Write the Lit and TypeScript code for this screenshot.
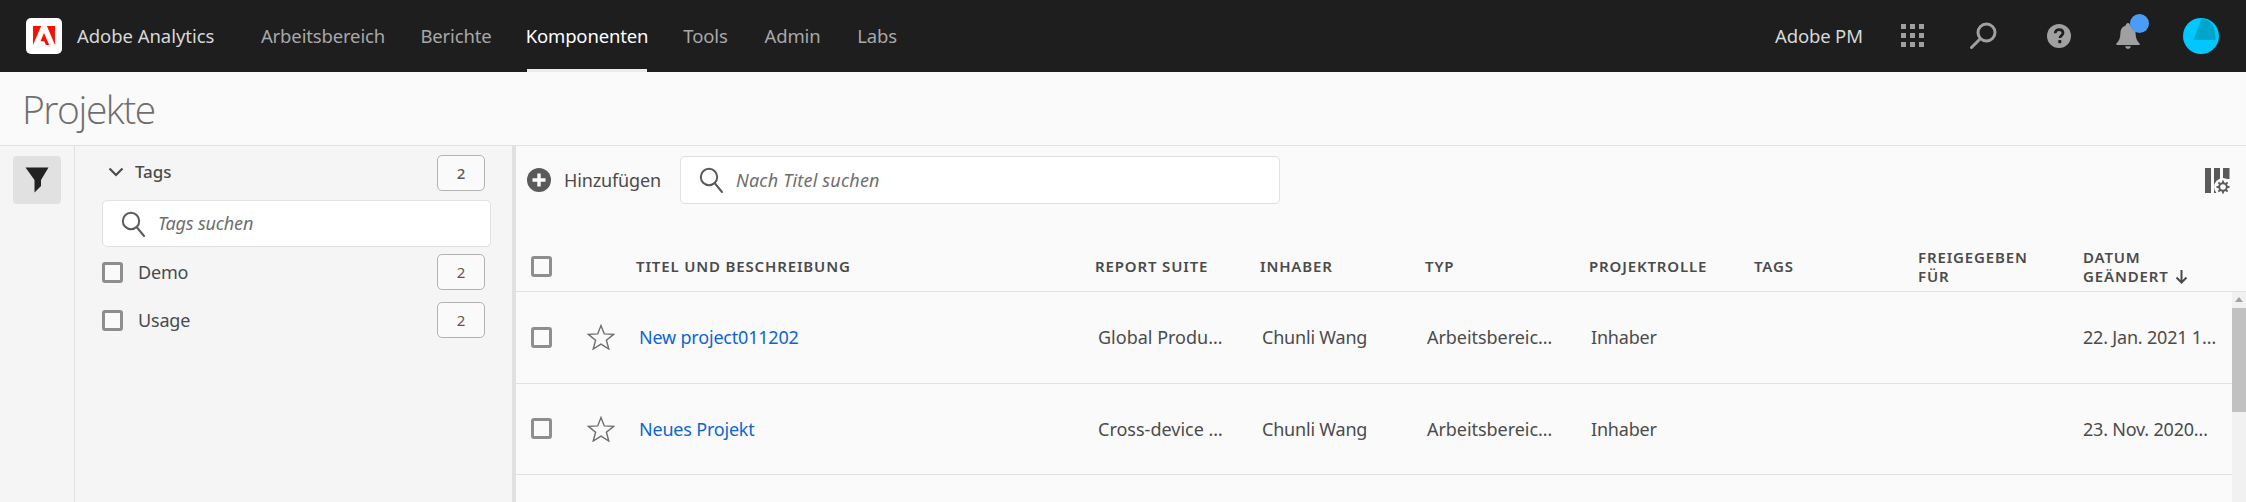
import { LitElement, html, css, svg } from "lit";
import { customElement } from "lit/decorators.js";

const searchIcon = (cls: string) => html`<svg class=${cls} viewBox="0 0 24 26" fill="none" stroke="currentColor" stroke-width="2"><circle cx="10" cy="10" r="8.2"/><path d="M16 16.5 L23 25" stroke-linecap="round"/></svg>`;
const star = html`<svg class="star" viewBox="0 0 28 26" fill="none" stroke="#6e6e6e" stroke-width="1.4"><path d="M14 1.5 L17.3 9.9 L26.6 10.4 L19.4 16.2 L21.8 25 L14 20.1 L6.2 25 L8.6 16.2 L1.4 10.4 L10.7 9.9 Z"/></svg>`;

const columns = ["Titel und Beschreibung", "Report Suite", "Inhaber", "Typ", "Projektrolle", "Tags", "Freigegeben für"];
const rows = [
  { title: "New project011202", suite: "Global Produ…", owner: "Chunli Wang", type: "Arbeitsbereic…", role: "Inhaber", date: "22. Jan. 2021 1…" },
  { title: "Neues Projekt", suite: "Cross-device …", owner: "Chunli Wang", type: "Arbeitsbereic…", role: "Inhaber", date: "23. Nov. 2020…" },
];

@customElement("app-root")
export class AppRoot extends LitElement {
  static styles = css`
    :host { display: block; height: 100vh; overflow: hidden; background: #fafafa; color: #4b4b4b;
      font-family: "Noto Sans", "Open Sans", sans-serif; font-size: 17px; }
    * { box-sizing: border-box; }
    header { height: 72px; background: #1e1e1e; display: flex; align-items: stretch; color: #a8a8a8; }
    .brand { width: 261px; padding-left: 26px; display: flex; align-items: center; gap: 15px; color: #d8d8d8; font-size: 18.5px; letter-spacing: -0.05px; white-space: nowrap; padding-bottom: 1px; }
    .logo { width: 36px; height: 36px; background: #fff; border-radius: 5px; display: flex; align-items: center; justify-content: center; }
    .logo svg { width: 22px; height: 19px; display: block; }
    nav { display: grid; grid-template-columns: 124px 70px 120px 45px 57px 40px; column-gap: 36px; }
    nav a { display: flex; align-items: center; justify-content: center; white-space: nowrap; font-size: 18.5px; letter-spacing: -0.15px; padding-bottom: 2px; }
    nav a.on { color: #fff; box-shadow: inset 0 -3px 0 #ececec; }
    .tools { margin-left: auto; display: flex; align-items: center; color: #a0a0a0; }
    .user { color: #d8d8d8; font-size: 18.5px; letter-spacing: -0.15px; width: 126px; white-space: nowrap; padding-bottom: 1px; }
    .tools svg { display: block; }
    .grid9 { width: 23px; height: 23px; margin-right: 45px; margin-top: -2px; }
    .hsearch { width: 28px; height: 28px; margin-right: 50px; margin-top: -1px; }
    .help { width: 24px; height: 24px; margin-right: 45px; margin-top: -1px; }
    .bell { position: relative; width: 24px; height: 26px; margin-right: 43px; }
    .dot { position: absolute; left: 14px; top: -9px; width: 19px; height: 19px; border-radius: 50%; background: #4b9cf5; }
    .avatar { width: 36px; height: 36px; margin-right: 27px; }
    .title { height: 74px; border-bottom: 1px solid #e1e1e1; padding-left: 22px; font-size: 39px; font-weight: 300; color: #6e6e6e; display: flex; align-items: center; letter-spacing: -1.45px; font-family: "Open Sans", sans-serif; }
    main { display: flex; height: 356px; overflow: hidden; }
    .rail { width: 75px; flex: none; background: #f5f5f5; border-right: 1px solid #e1e1e1; padding: 10px 0 0 13px; }
    .rail button { width: 48px; height: 48px; background: #e1e1e1; border: 0; border-radius: 4px; padding: 0; display: flex; align-items: center; justify-content: center; }
    .rail svg { width: 24px; height: 26px; }
    .panel { width: 437px; flex: none; background: #f5f5f5; padding: 9px 21px 0 27px; }
    .splitter { width: 4px; flex: none; background: #e1e1e1; }
    .thead { height: 36px; display: flex; align-items: center; padding-left: 6px; font-weight: 500; font-size: 17px; letter-spacing: -0.1px; }
    .thead .lbl { margin-top: -3px; }
    .thead svg { width: 16px; height: 10px; margin-right: 11px; margin-top: -2px; }
    .badge { margin-left: auto; margin-right: 6px; width: 48px; height: 36px; border: 1px solid #b3b3b3; border-radius: 5px; display: flex; align-items: center; justify-content: center; font-size: 15px; color: #5a5a5a; background: #fafafa; }
    .tsearch { height: 47px; margin-top: 9px; background: #fff; border: 1px solid #e1e1e1; border-radius: 5px; display: flex; align-items: center; padding-left: 18px; gap: 13px; color: #6e6e6e; font-style: italic; font-size: 18px; letter-spacing: -0.15px; line-height: 24px; }
    .tsearch .ph { margin-top: -2px; }
    .ic { width: 24px; height: 26px; flex: none; color: #5a5a5a; }
    .tag { height: 36px; margin-top: 12px; display: flex; align-items: center; font-size: 18px; letter-spacing: -0.2px; }
    .tsearch + .tag { margin-top: 7px; }
    .cb { width: 21px; height: 21px; border: 3px solid #8e8e8e; border-radius: 3px; background: #fafafa; flex: none; display: block; }
    .tag .cb { margin-right: 15px; }
    .content { flex: 1; min-width: 0; display: flex; flex-direction: column; }
    .toolbar { height: 96px; flex: none; display: flex; padding: 10px 16px 0 11px; align-items: flex-start; }
    .add { height: 48px; display: flex; align-items: center; gap: 13px; font-size: 18px; letter-spacing: -0.15px; width: 153px; white-space: nowrap; }
    .add svg { width: 24px; height: 24px; flex: none; }
    .csearch { width: 600px; height: 48px; background: #fff; border: 1px solid #e1e1e1; border-radius: 5px; display: flex; align-items: center; padding-left: 18px; gap: 13px; color: #6e6e6e; font-style: italic; font-size: 18px; letter-spacing: 0.2px; }
    .colset { margin-left: auto; margin-top: 12px; margin-right: -1px; width: 26px; height: 26px; }
    .grid { display: grid; grid-template-columns: 71px 49px 459px 165px 165px 164px 165px 164px 165px 1fr; align-items: center; }
    .hrow { height: 50px; flex: none; border-bottom: 1px solid #e1e1e1; font-size: 15px; font-weight: 600; letter-spacing: 0.85px; text-transform: uppercase; line-height: 19px; color: #4b4b4b; }
    .hrow .cb, .row .cb { margin-left: 15px; }
    .hrow .wrap { width: 124px; }
    .sort { width: 13px; height: 14px; vertical-align: -2px; margin-left: 6px; }
    .body { flex: 1; display: flex; min-height: 0; }
    .rows { flex: 1; min-width: 0; }
    .row { height: 91.5px; border-bottom: 1px solid #e1e1e1; font-size: 18px; letter-spacing: -0.2px; white-space: nowrap; }
    .row .cell { padding-left: 2px; }
    .row .suite { padding-left: 3px; letter-spacing: 0; }
    .row .type { letter-spacing: -0.05px; }
    .row .date { padding-left: 0; }
    .row a { color: #0d66d0; padding-left: 3px; }
    .star { width: 28px; height: 26px; display: block; }
    .scroll { width: 14px; flex: none; background: #f1f1f1; padding-top: 5px; }
    .arrow { width: 0; height: 0; margin: 0 auto; border: 4px solid transparent; border-top: 0; border-bottom: 5px solid #a3a3a3; }
    .thumb { height: 104px; margin-top: 6px; background: #c1c1c1; }
  `;

  render() {
    return html`
      <header>
        <div class="brand">
          <span class="logo"><svg viewBox="0 0 30 26"><path fill="#fa0f00" d="M19 0h11v26zM11.1 0H0v26zM15 9.6L22.1 26h-4.6l-2.1-5.2h-5.2z"/></svg></span>
          Adobe Analytics
        </div>
        <nav>
          <a>Arbeitsbereich</a><a>Berichte</a><a class="on">Komponenten</a><a>Tools</a><a>Admin</a><a>Labs</a>
        </nav>
        <div class="tools">
          <span class="user">Adobe PM</span>
          <svg class="grid9" viewBox="0 0 23 23" fill="currentColor">
            ${[0, 9, 18].map((y) => [0, 9, 18].map((x) => svg`<rect x=${x} y=${y} width="5" height="5"/>`))}
          </svg>
          <svg class="hsearch" viewBox="0 0 28 28" fill="none" stroke="currentColor" stroke-width="3"><circle cx="17.5" cy="10.5" r="8.5"/><path d="M11 17 L2.5 25.5" stroke-linecap="round"/></svg>
          <svg class="help" viewBox="0 0 24 24"><circle cx="12" cy="12" r="12" fill="currentColor"/><path d="M8.2 9.2 C8.2 6.8 10 5.6 12.2 5.6 C14.6 5.6 16 7 16 8.9 C16 11.4 13 11.6 13 14" fill="none" stroke="#1e1e1e" stroke-width="2.8"/><rect x="11.2" y="16" width="3.2" height="3.2" rx="1" fill="#1e1e1e"/></svg>
          <span class="bell">
            <svg viewBox="0 0 24 26" width="24" height="26" fill="currentColor"><path d="M12 0 C13.4 0 14 1 14.2 2.4 C18 3.4 19.6 6.6 19.6 10.5 C19.6 15 21 18 23.6 20.6 V22 H0.4 V20.6 C3 18 4.4 15 4.4 10.5 C4.4 6.6 6 3.4 9.8 2.4 C10 1 10.6 0 12 0 Z"/><path d="M9.2 23.2 H14.8 C14.4 25 13.4 25.8 12 25.8 C10.6 25.8 9.6 25 9.2 23.2 Z"/></svg>
            <span class="dot"></span>
          </span>
          <svg class="avatar" viewBox="0 0 36 36"><circle cx="18" cy="18" r="18" fill="#00c8ff"/><path d="M10.5 22 L18.5 1 C26 1 33 7 32.5 22 Z" fill="#00a5cc"/></svg>
        </div>
      </header>
      <div class="title">Projekte</div>
      <main>
        <div class="rail">
          <button><svg viewBox="0 0 24 26"><path fill="#222" d="M0.5 0.5 H23.5 L16 13 V19 L9.5 25.5 V13 Z"/></svg></button>
        </div>
        <div class="panel">
          <div class="thead">
            <svg viewBox="0 0 16 10" fill="none" stroke="#4b4b4b" stroke-width="2.2"><path d="M1.5 1.5 L8 8 L14.5 1.5"/></svg>
            <span class="lbl">Tags</span><span class="badge">2</span>
          </div>
          <div class="tsearch">${searchIcon("ic")}<span class="ph">Tags suchen</span></div>
          <div class="tag"><span class="cb"></span>Demo<span class="badge">2</span></div>
          <div class="tag"><span class="cb"></span>Usage<span class="badge">2</span></div>
        </div>
        <div class="splitter"></div>
        <div class="content">
          <div class="toolbar">
            <div class="add">
              <svg viewBox="0 0 24 24"><circle cx="12" cy="12" r="12" fill="#5a5a5a"/><path d="M12 5.5 V18.5 M5.5 12 H18.5" stroke="#fafafa" stroke-width="3.4"/></svg>
              Hinzufügen
            </div>
            <div class="csearch">${searchIcon("ic")}Nach Titel suchen</div>
            <svg class="colset" viewBox="0 0 26 26" fill="#5a5a5a"><rect x="0" y="0" width="6" height="25"/><rect x="9" y="0" width="6" height="25"/><rect x="18" y="0" width="6.5" height="11"/><circle cx="18" cy="19" r="9" fill="#fafafa"/><g fill="none" stroke="#5a5a5a"><circle cx="18" cy="19" r="3.8" stroke-width="2"/><path d="M18 12.5 V15 M18 23 V25.5 M11.5 19 H14 M22 19 H24.5 M13.4 14.4 L15 16 M21 22 L22.6 23.6 M22.6 14.4 L21 16 M15 22 L13.4 23.6" stroke-width="1.8"/></g></svg>
          </div>
          <div class="hrow grid">
            <span class="cb"></span>
            <span></span>
            ${columns.map((c, i) => html`<span class=${i === 6 ? "wrap" : ""}>${c}</span>`)}
            <span class="wrap">Datum geändert<svg class="sort" viewBox="0 0 13 14" fill="none" stroke="#4b4b4b" stroke-width="2"><path d="M6.5 0 V12.5 M1.5 7.5 L6.5 12.5 L11.5 7.5"/></svg></span>
          </div>
          <div class="body">
            <div class="rows">
              ${rows.map((r) => html`
                <div class="row grid">
                  <span class="cb"></span>
                  ${star}
                  <a>${r.title}</a>
                  <span class="cell suite">${r.suite}</span>
                  <span class="cell">${r.owner}</span>
                  <span class="cell type">${r.type}</span>
                  <span class="cell">${r.role}</span>
                  <span></span><span></span>
                  <span class="date">${r.date}</span>
                </div>`)}
            </div>
            <div class="scroll"><div class="arrow"></div><div class="thumb"></div></div>
          </div>
        </div>
      </main>
    `;
  }
}
